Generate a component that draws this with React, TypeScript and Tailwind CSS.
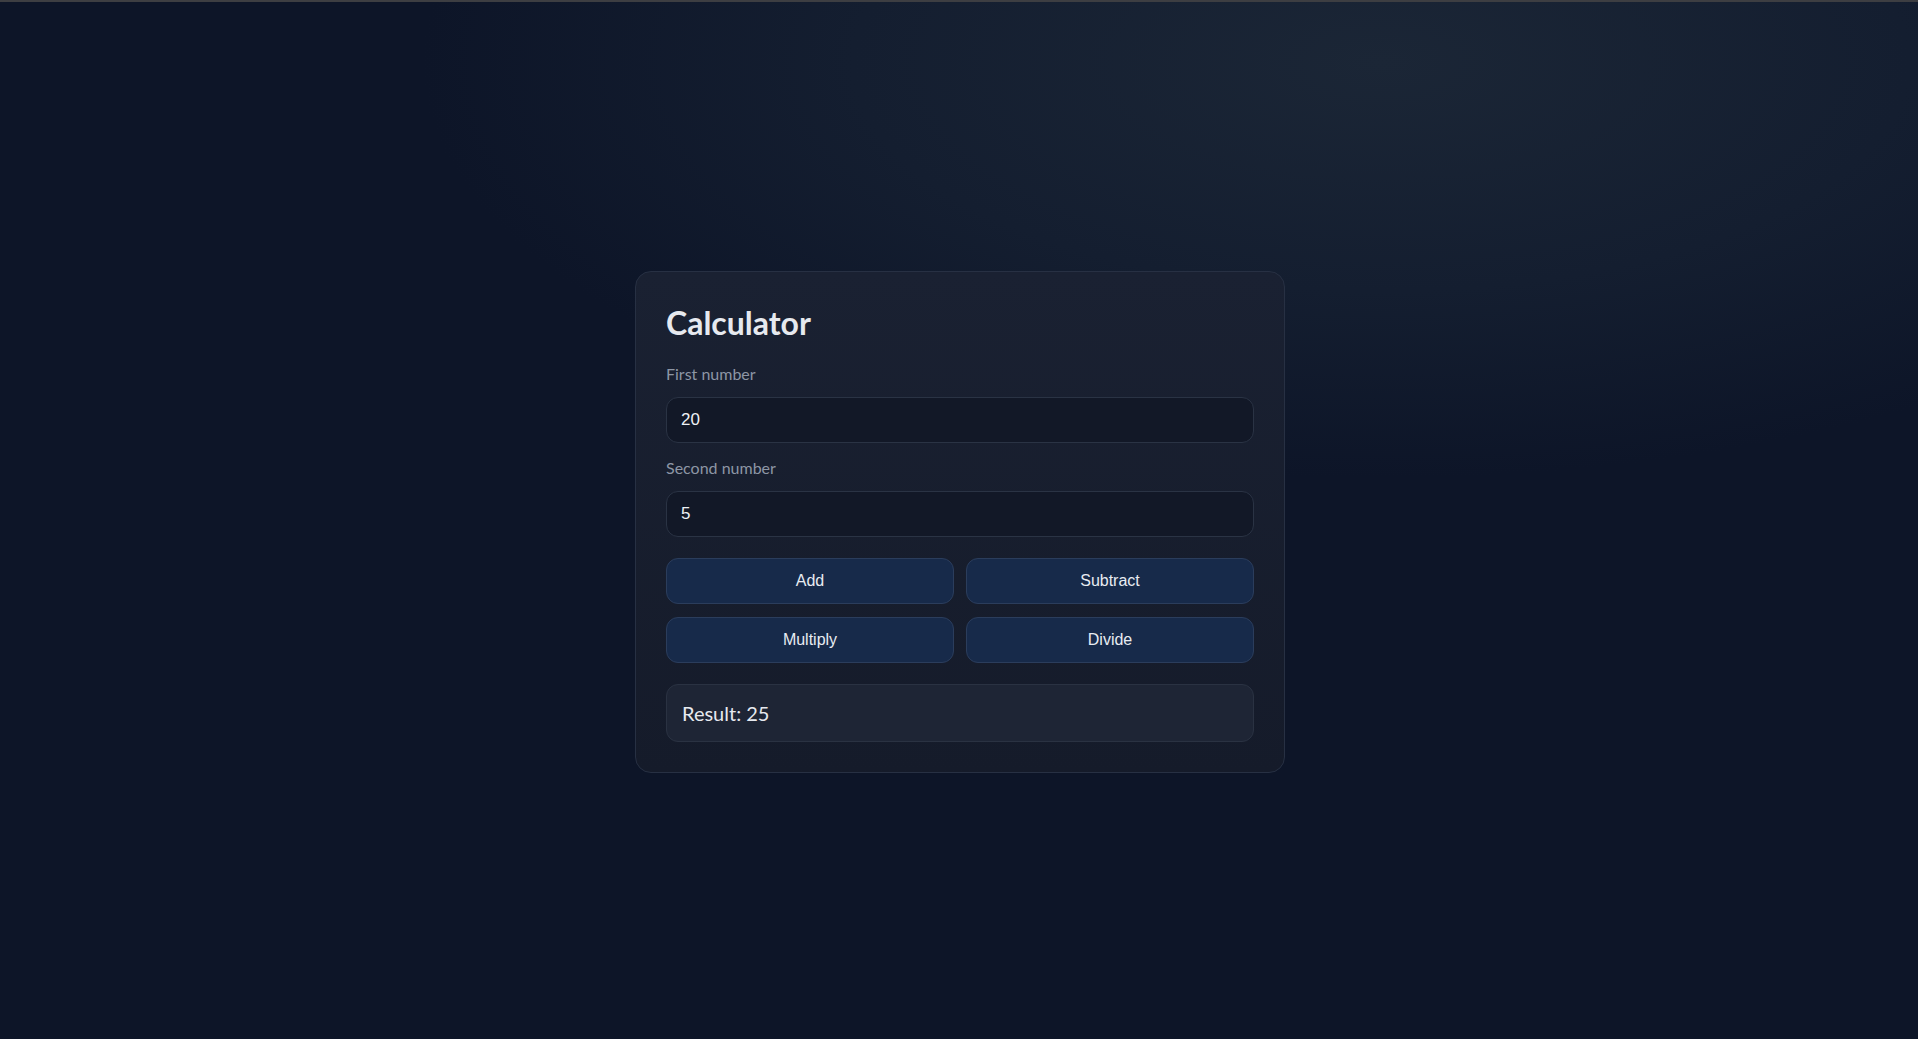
import { useState } from 'react';

export default function App() {
  const [a, setA] = useState('20');
  const [b, setB] = useState('5');
  const [result, setResult] = useState<number | string>(25);

  const run = (op: string) => {
    const x = parseFloat(a);
    const y = parseFloat(b);
    if (isNaN(x) || isNaN(y)) return setResult('Invalid input');
    if (op === 'Add') setResult(x + y);
    if (op === 'Subtract') setResult(x - y);
    if (op === 'Multiply') setResult(x * y);
    if (op === 'Divide') setResult(y === 0 ? 'Cannot divide by zero' : x / y);
  };

  return (
    <div className="relative min-h-screen flex items-center justify-center pt-[5px] pl-[2px] bg-[#0d1528] bg-[radial-gradient(ellipse_50%_40%_at_72%_6%,#1b2636_0%,#141e30_55%,#0d1528_100%)] font-['Lato',sans-serif]">
      <div className="absolute top-0 left-0 right-0 h-[2px] bg-[#3d3e42]" />
      <div className="w-[650px] rounded-[16px] border border-[#273043] bg-gradient-to-b from-[#1a2132] to-[#151b2a] p-[30px]">
        <h1 className="text-[32px] leading-[42px] font-bold text-[#e6e9ef]">Calculator</h1>

        <div className="mt-[20px] flex flex-col">
          <label className="text-[16px] leading-[20px] text-[#8d96a5] mb-[13px]">First number</label>
          <input
            value={a}
            onChange={(e) => setA(e.target.value)}
            className="h-[46px] rounded-[12px] border border-[#2a3344] bg-[#121827] px-[14px] text-[17px] text-[#eef1f5] font-['Liberation_Sans',Arial,sans-serif] outline-none"
          />
        </div>

        <div className="mt-[15px] flex flex-col">
          <label className="text-[16px] leading-[20px] text-[#8d96a5] mb-[13px]">Second number</label>
          <input
            value={b}
            onChange={(e) => setB(e.target.value)}
            className="h-[46px] rounded-[12px] border border-[#2a3344] bg-[#121827] px-[14px] text-[17px] text-[#eef1f5] font-['Liberation_Sans',Arial,sans-serif] outline-none"
          />
        </div>

        <div className="mt-[21px] grid grid-cols-2 gap-x-[12px] gap-y-[13px]">
          {['Add', 'Subtract', 'Multiply', 'Divide'].map((op) => (
            <button
              key={op}
              type="button"
              onClick={() => run(op)}
              className="h-[46px] rounded-[12px] border border-[#2b3d5c] bg-[#172a4a] text-[16px] text-[#e8ecf2] font-['Liberation_Sans',Arial,sans-serif]"
            >
              {op}
            </button>
          ))}
        </div>

        <div className="mt-[21px] h-[58px] flex items-center rounded-[12px] border border-[#2a3242] bg-[#1e2535] px-[15px] text-[20px] text-[#e6e9ef]">
          Result: {result}
        </div>
      </div>
    </div>
  );
}
